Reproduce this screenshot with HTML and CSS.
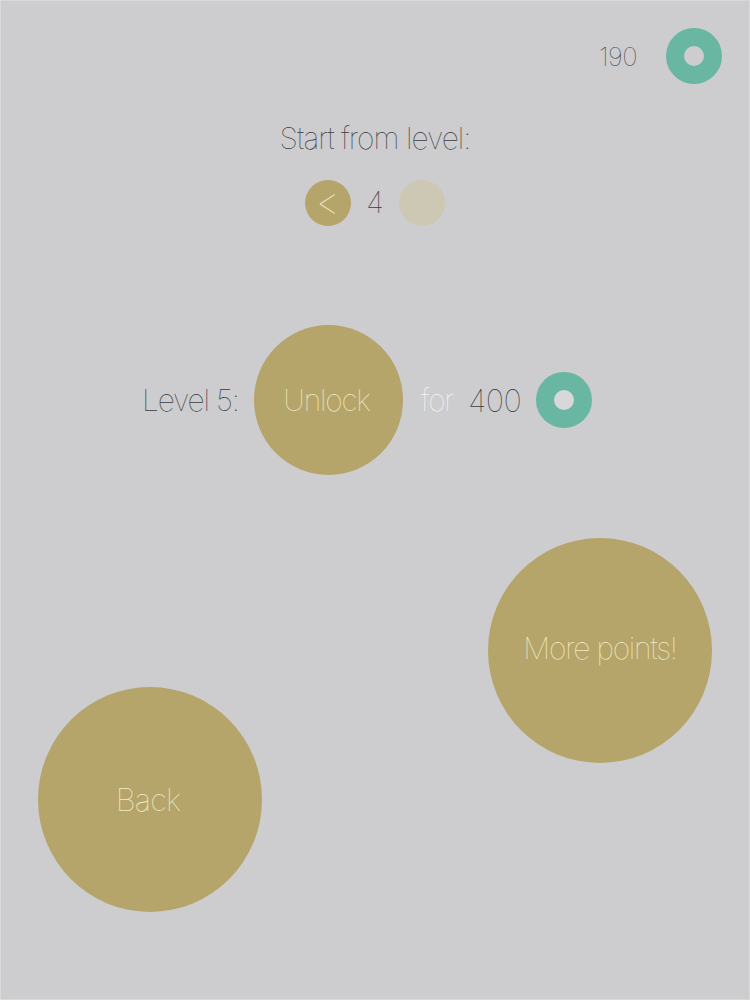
FILE: index.html
```html
<!DOCTYPE html>
<html lang="en">
  <head>
    <meta charset="UTF-8" />
    <title>Unlock levels</title>
    <link rel="stylesheet" href="styles.css">
  </head>
  <body>
    <div class="screen">
      <div class="score">
        <span class="score-value">190</span>
        <div class="coin"></div>
      </div>

      <h1 class="start-title">Start from level:</h1>
      <div class="stepper">
        <div class="circle step">&lt;</div>
        <span class="step-value">4</span>
        <div class="circle step disabled"></div>
      </div>

      <div class="unlock-row">
        <span class="level-label">Level 5:</span>
        <div class="circle unlock">Unlock</div>
        <span class="for-label">for</span>
        <span class="price">400</span>
        <div class="coin"></div>
      </div>

      <div class="actions">
        <div class="circle big back">Back</div>
        <div class="circle big more">More points!</div>
      </div>
    </div>
  </body>
</html>
```

FILE: styles.css
```css
* {
  box-sizing: border-box;
  margin: 0;
  padding: 0;
}

body {
  width: 750px;
  height: 1000px;
  overflow: hidden;
  background: #cdccce;
  font-family: 'Inter', 'Liberation Sans', sans-serif;
  font-weight: 100;
  color: #3c3c40;
}

.screen {
  height: 1000px;
  padding-top: 27px;
  border: 1px solid #dad9da;
}

.circle {
  display: flex;
  justify-content: center;
  align-items: center;
  flex-shrink: 0;
  border-radius: 50%;
  background: #b5a56b;
  color: #f3ebc4;
}

.coin {
  width: 56px;
  height: 56px;
  border-radius: 50%;
  border: 18px solid #69b7a2;
  flex-shrink: 0;
}

.score {
  display: flex;
  justify-content: flex-end;
  align-items: center;
  gap: 29px;
  padding-right: 27px;
}

.score-value {
  font-size: 26px;
  letter-spacing: -0.5px;
}

.start-title {
  margin-top: 35px;
  font-size: 30px;
  font-weight: 100;
  line-height: 38px;
  text-align: center;
  letter-spacing: -1px;
}

.stepper {
  display: flex;
  align-items: center;
  margin-top: 23px;
  padding-left: 304px;
}

.step {
  width: 46px;
  height: 46px;
  padding-bottom: 4px;
  font-size: 38px;
}

.step.disabled {
  background: #cdc8b4;
}

.step-value {
  width: 48px;
  padding-bottom: 3px;
  font-size: 30px;
  text-align: center;
}

.unlock-row {
  display: flex;
  align-items: center;
  margin-top: 99px;
  padding-left: 141px;
  font-size: 30px;
  letter-spacing: -1.2px;
}

.level-label {
  width: 112px;
}

.unlock {
  width: 149px;
  height: 150px;
  padding-right: 4px;
}

.for-label {
  margin-left: 18px;
  color: #f4f4f6;
}

.price {
  margin-left: 15px;
  font-size: 31px;
  letter-spacing: -0.6px;
}

.unlock-row .coin {
  margin-left: 15px;
  background: #d8d8d9;
}

.actions {
  display: flex;
  justify-content: space-between;
  align-items: flex-start;
  margin-top: 63px;
  padding: 0 37px;
  font-size: 30px;
  letter-spacing: -1.2px;
}

.big {
  width: 224px;
  height: 225px;
}

.back {
  margin-top: 149px;
  padding-right: 4px;
  font-size: 31px;
  letter-spacing: -0.8px;
}

.more {
  padding-bottom: 5px;
}
```
